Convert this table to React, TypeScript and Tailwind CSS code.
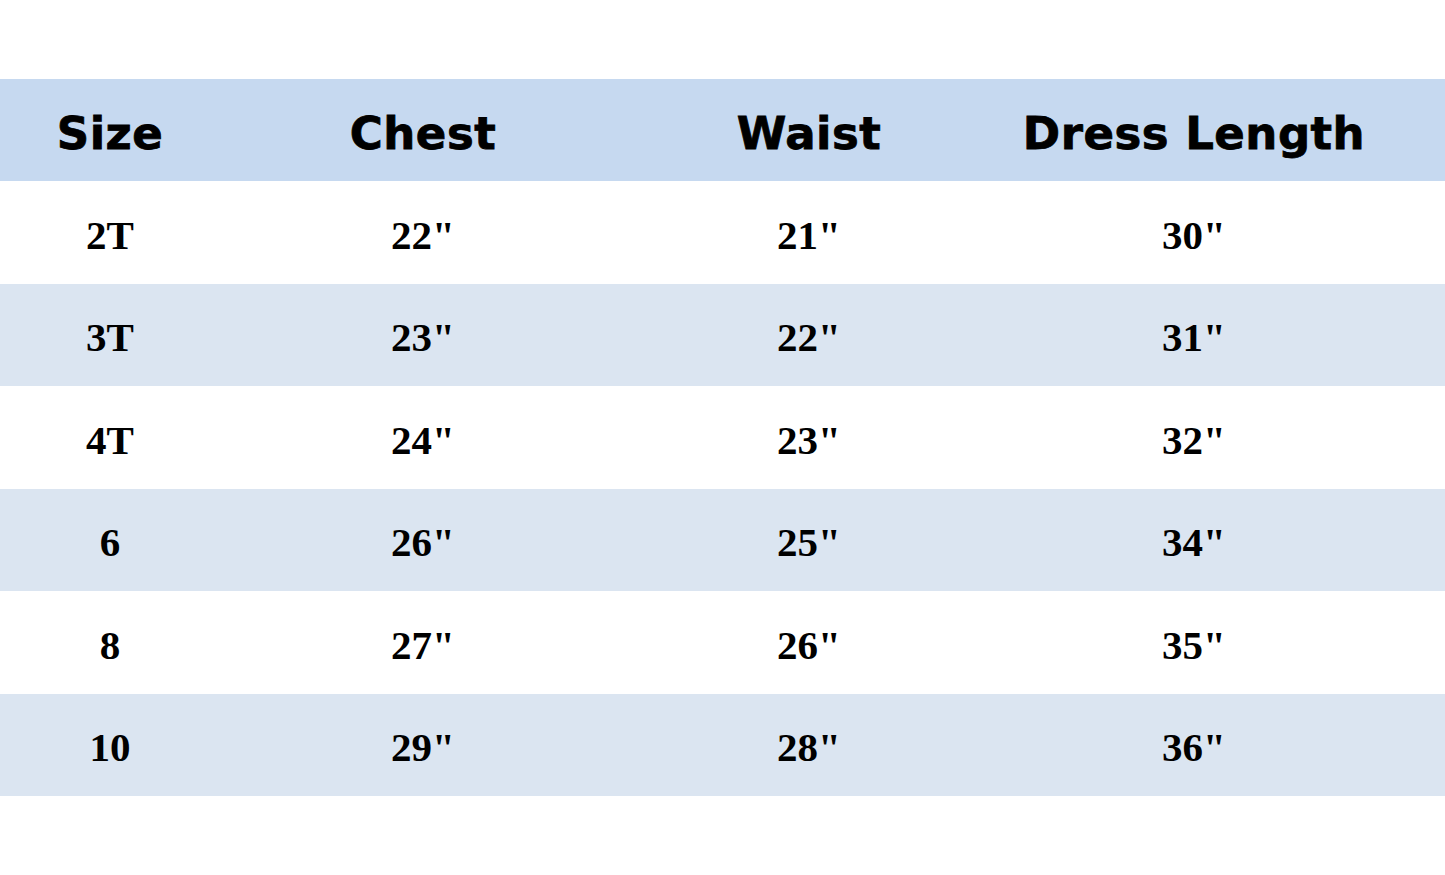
import React from "react";

const rows = [
  ["2T", "22\"", "21\"", "30\""],
  ["3T", "23\"", "22\"", "31\""],
  ["4T", "24\"", "23\"", "32\""],
  ["6", "26\"", "25\"", "34\""],
  ["8", "27\"", "26\"", "35\""],
  ["10", "29\"", "28\"", "36\""],
];

const headers = ["Size", "Chest", "Waist", "Dress Length"];

export default function App() {
  return (
    <div className="w-[1445px] h-[875px] bg-white pt-[79px]">
      <div className="grid grid-cols-[220px_406px_366px_404px] h-[102px] bg-[#c6d9f0] w-full">
        {headers.map((h) => (
          <div
            key={h}
            className="flex items-center justify-center pt-[8px] text-[45px] font-bold text-black tracking-[0.5px]"
            style={{ fontFamily: '"DejaVu Sans", sans-serif', WebkitTextStroke: "0.8px black" }}
          >
            {h}
          </div>
        ))}
      </div>
      {rows.map((r, i) => (
        <div
          key={i}
          className={`grid grid-cols-[220px_406px_366px_404px] h-[102.5px] w-full ${i % 2 === 1 ? "bg-[#dbe5f1]" : "bg-white"}`}
        >
          {r.map((c, j) => (
            <div
              key={j}
              className="flex items-center justify-center pt-[6px] text-[41px] font-bold text-black"
              style={{ fontFamily: '"Liberation Serif", serif' }}
            >
              {c}
            </div>
          ))}
        </div>
      ))}
    </div>
  );
}
